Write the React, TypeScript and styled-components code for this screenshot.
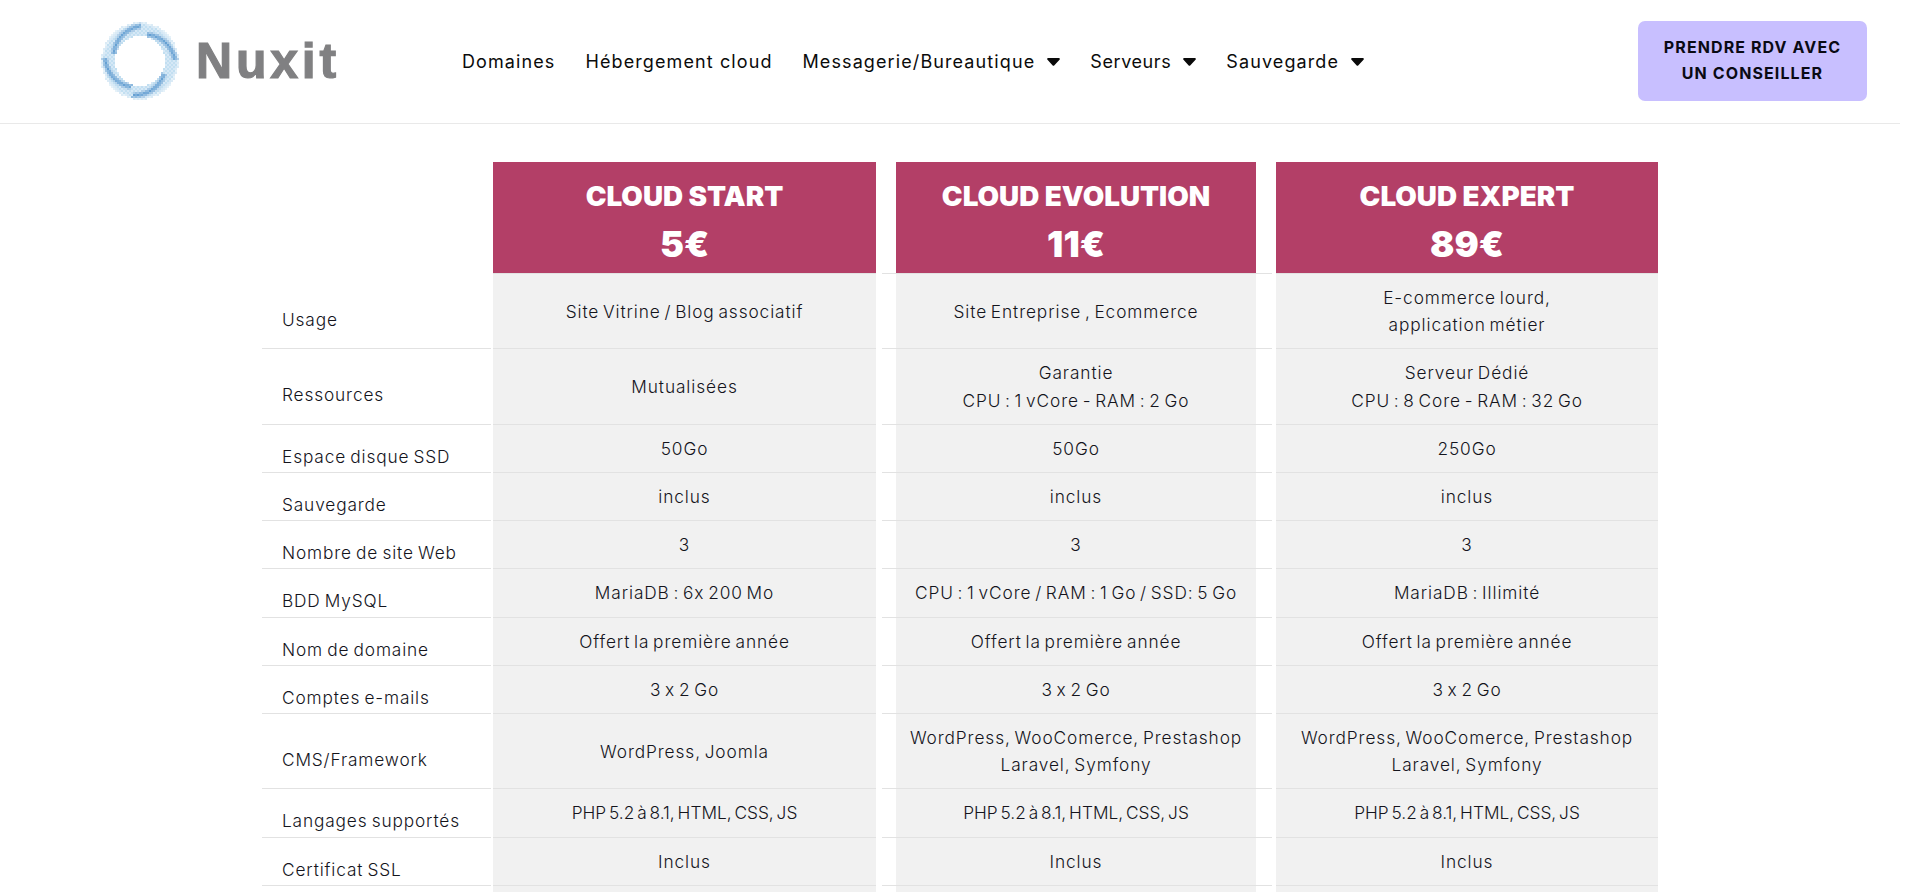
import React from "react";
import styled, { createGlobalStyle } from "styled-components";

const BODY_FONT = `Inter, "Noto Sans", "Liberation Sans", sans-serif`;

const navItems = [
    { text: "Domaines", caret: false, tight: false },
    { text: "Hébergement cloud", caret: false, tight: false },
    { text: "Messagerie/Bureautique", caret: true, tight: false },
    { text: "Serveurs", caret: true, tight: true },
    { text: "Sauvegarde", caret: true, tight: false },
];

const plans = [
    { name: "CLOUD START", price: "5€" },
    { name: "CLOUD EVOLUTION", price: "11€" },
    { name: "CLOUD EXPERT", price: "89€" },
];

const rows: { label: string; values: string[][]; tight?: boolean }[] = [
    { label: "Usage", values: [["Site Vitrine / Blog associatif"], ["Site Entreprise , Ecommerce"], ["E-commerce lourd,", "application métier"]] },
    { label: "Ressources", values: [["Mutualisées"], ["Garantie", "CPU : 1 vCore - RAM : 2 Go"], ["Serveur Dédié", "CPU : 8 Core - RAM : 32 Go"]] },
    { label: "Espace disque SSD", values: [["50Go"], ["50Go"], ["250Go"]] },
    { label: "Sauvegarde", values: [["inclus"], ["inclus"], ["inclus"]] },
    { label: "Nombre de site Web", values: [["3"], ["3"], ["3"]] },
    { label: "BDD MySQL", values: [["MariaDB : 6x 200 Mo"], ["CPU : 1 vCore / RAM : 1 Go / SSD: 5 Go"], ["MariaDB : Illimité"]] },
    { label: "Nom de domaine", values: [["Offert la première année"], ["Offert la première année"], ["Offert la première année"]] },
    { label: "Comptes e-mails", values: [["3 x 2 Go"], ["3 x 2 Go"], ["3 x 2 Go"]] },
    { label: "CMS/Framework", values: [["WordPress, Joomla"], ["WordPress, WooComerce, Prestashop", "Laravel, Symfony"], ["WordPress, WooComerce, Prestashop", "Laravel, Symfony"]] },
    { label: "Langages supportés", tight: true, values: [["PHP 5.2 à 8.1, HTML, CSS, JS"], ["PHP 5.2 à 8.1, HTML, CSS, JS"], ["PHP 5.2 à 8.1, HTML, CSS, JS"]] },
    { label: "Certificat SSL", values: [["Inclus"], ["Inclus"], ["Inclus"]] },
    { label: "", values: [[""], [""], [""]] },
];

// four swirl arms, clockwise, angles in degrees on screen
const arms = [-165, -77, 27, 108];

const ringDots = () => {
    const dots: { x: number; y: number; o: number; fill: string }[] = [];
    for (let x = -40; x <= 40; x += 2) {
        for (let y = -40; y <= 40; y += 2) {
            const r = Math.hypot(x, y);
            if (r < 25 || r > 38.5) continue;
            const deg = (Math.atan2(y, x) * 180) / Math.PI;
            let arm = 0;
            arms.forEach((start) => {
                const t = (((deg - start) % 360) + 360) % 360 / 76;
                if (t > 1) return;
                const center = 27 + t * 8;
                arm = Math.max(arm, 1 - Math.abs(r - center) / 3.6);
            });
            const dither = (x + y) % 4 === 0 ? 0.12 : 0;
            const edge = r > 36.5 ? 0.6 : 1;
            if (arm > 0.05) {
                dots.push({ x, y, o: Math.min(1, 0.3 + arm * 0.55 + dither), fill: "#2176bf" });
            } else {
                dots.push({ x, y, o: (0.38 + dither * 1.5) * edge, fill: "#6aaedc" });
            }
        }
    }
    return dots;
};

const LogoRing = () => (
    <svg width="80" height="80" viewBox="-40 -40 80 80">
        {ringDots().map((d, i) => (
            <rect key={i} x={d.x - 0.85} y={d.y - 0.85} width="1.7" height="1.7" fill={d.fill} opacity={d.o} />
        ))}
    </svg>
);

const Caret = () => (
    <CaretIcon width="13" height="8" viewBox="0 0 13 8">
        <path d="M1.2 0h10.6c.9 0 1.4 1.1.7 1.8L7.2 7.4c-.4.4-1.1.4-1.5 0L.5 1.8C-.2 1.1.3 0 1.2 0z" fill="#0a0a0a" />
    </CaretIcon>
);

const App = () => {
    return (
        <>
            <GlobalStyle />
            <Page>
                <Header>
                    <Logo>
                        <LogoRing />
                        <LogoText>Nuxit</LogoText>
                    </Logo>
                    <Nav>
                        {navItems.map((item) => (
                            <NavItem key={item.text} $tight={item.tight}>
                                {item.text}
                                {item.caret && <Caret />}
                            </NavItem>
                        ))}
                    </Nav>
                    <CtaButton>
                        PRENDRE RDV AVEC
                        <br />
                        UN CONSEILLER
                    </CtaButton>
                </Header>
                <PriceTable>
                    <Row>
                        <EmptyHead />
                        {plans.map((plan, index) => (
                            <ValueCell key={plan.name} $middle={index === 1}>
                                <PlanHead>
                                    <PlanName>{plan.name}</PlanName>
                                    <PlanPrice>{plan.price}</PlanPrice>
                                </PlanHead>
                            </ValueCell>
                        ))}
                    </Row>
                    {rows.map((row, rowIndex) => (
                        <Row key={rowIndex}>
                            <LabelCell>{row.label}</LabelCell>
                            {row.values.map((lines, index) => (
                                <ValueCell key={index} $middle={index === 1}>
                                    <ValueBody $tight={!!row.tight}>
                                        <div>
                                            {lines.map((line) => (
                                                <div key={line}>{line}</div>
                                            ))}
                                        </div>
                                    </ValueBody>
                                </ValueCell>
                            ))}
                        </Row>
                    ))}
                </PriceTable>
            </Page>
        </>
    );
};

export default App;

const GlobalStyle = createGlobalStyle`
html, body {
    margin: 0;
    height: 892px;
    overflow: hidden;
    background: #fff;
}
* {
    box-sizing: border-box;
}
`;

const Page = styled.div`
width: 1900px;
font-family: ${BODY_FONT};
font-feature-settings: "calt" 0;
`;

const Header = styled.header`
height: 124px;
display: flex;
align-items: center;
padding: 0 33px 2px 100px;
border-bottom: 1px solid #e9e9e9;
`;

const Logo = styled.div`
display: flex;
align-items: center;
gap: 16px;
width: 362px;
`;

const LogoText = styled.span`
font-family: "Liberation Sans", Arial, sans-serif;
font-weight: 700;
font-size: 50px;
line-height: 1;
letter-spacing: 3.8px;
color: #808082;
-webkit-text-stroke: 1.2px #808082;
`;

const Nav = styled.nav`
display: flex;
align-items: center;
gap: 30px;
margin-top: 2px;
`;

const NavItem = styled.span<{ $tight: boolean }>`
display: flex;
align-items: center;
gap: 12px;
font-size: 18px;
line-height: 26px;
letter-spacing: ${({ $tight }) => ($tight ? "0.6px" : "1.1px")};
color: #0b0b0b;
font-weight: 400;
white-space: nowrap;
`;

const CaretIcon = styled.svg`
display: block;
margin-top: 1px;
`;

const CtaButton = styled.div`
margin-left: auto;
width: 229px;
height: 80px;
display: flex;
flex-direction: column;
align-items: center;
justify-content: center;
text-align: center;
background: #c8bfff;
border-radius: 7px;
font-size: 16px;
line-height: 25.6px;
font-weight: 700;
letter-spacing: 1.1px;
color: #0a0a14;
`;

const PriceTable = styled.div`
margin: 38px 0 0 262px;
width: 1396px;
`;

const Row = styled.div`
display: grid;
grid-template-columns: 231px 383px 6px 390px 4px 382px;
& > :nth-child(2) {
    grid-column: 2;
}
& > :nth-child(3) {
    grid-column: 4;
}
& > :nth-child(4) {
    grid-column: 6;
}
`;

const EmptyHead = styled.div``;

const LabelCell = styled.div`
display: flex;
align-items: center;
margin-right: 2px;
padding: 16px 10px 0 20px;
font-size: 17.3px;
line-height: 27.2px;
letter-spacing: 0.85px;
word-spacing: -1.5px;
font-weight: 300;
color: #14141c;
border-bottom: 1px solid #e2e2e2;
white-space: nowrap;
`;

const ValueCell = styled.div<{ $middle: boolean }>`
display: flex;
padding: ${({ $middle }) => ($middle ? "0 16px 0 14px" : "0")};
border-bottom: 1px solid #e2e2e2;
`;

const ValueBody = styled.div<{ $tight: boolean }>`
flex: 1;
display: flex;
align-items: center;
justify-content: center;
min-height: 47.2px;
padding: 10px 0;
background: #f1f1f1;
text-align: center;
font-size: 17.3px;
line-height: 27.2px;
letter-spacing: ${({ $tight }) => ($tight ? "0" : "0.9px")};
word-spacing: -2px;
font-weight: 300;
color: #14141c;
white-space: nowrap;
`;

const PlanHead = styled.div`
flex: 1;
height: 111px;
display: flex;
flex-direction: column;
align-items: center;
padding-top: 14px;
background: #b33f67;
color: #fff;
font-weight: 900;
`;

const PlanName = styled.div`
font-size: 27.8px;
line-height: 40px;
white-space: nowrap;
`;

const PlanPrice = styled.div`
font-size: 36px;
line-height: 50px;
margin-top: 3px;
`;
